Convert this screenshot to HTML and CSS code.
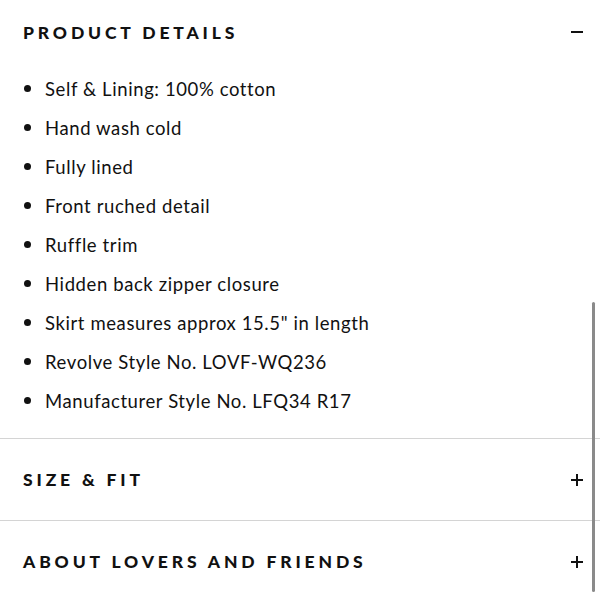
FILE: index.html
```html
<html>
 <head>
	<meta charset="UTF-8">
	<title>Product details</title>
	<link rel="stylesheet" href="styles.css">
 </head>
 <body>
 <div id="panel">
	<div class="section open">
		<div class="head">
			<span class="title">PRODUCT DETAILS</span>
			<span class="sign minus"></span>
		</div>
		<ul class="details">
			<li>Self &amp; Lining: 100% cotton</li>
			<li>Hand wash cold</li>
			<li>Fully lined</li>
			<li>Front ruched detail</li>
			<li>Ruffle trim</li>
			<li>Hidden back zipper closure</li>
			<li>Skirt measures approx 15.5" in length</li>
			<li>Revolve Style No. LOVF-WQ236</li>
			<li>Manufacturer Style No. LFQ34 R17</li>
		</ul>
	</div>
	<div class="section">
		<div class="head">
			<span class="title">SIZE &amp; FIT</span>
			<span class="sign plus"></span>
		</div>
	</div>
	<div class="section">
		<div class="head">
			<span class="title">ABOUT LOVERS AND FRIENDS</span>
			<span class="sign plus"></span>
		</div>
	</div>
 </div>
 <div class="scrollbar"></div>
 </body>
</html>
```

FILE: styles.css
```css
	*{margin:0;padding:0;}
	html,body{height:100%;overflow:hidden;background:#fff;}
	body{font-family:"Lato","Open Sans",sans-serif;color:#111;}

	#panel{width:600px;}

	.section{border-top:1px solid #d4d4d4;}
	.section.open{border-top:none;}

	.head{
		display:flex;
		align-items:center;
		justify-content:space-between;
		height:81px;
		padding:0 17px 0 23px;
	}
	.section.open .head{height:64px;}

	.title{
		font-size:17.5px;
		font-weight:900;
		letter-spacing:3.85px;
	}

	/* 加减号 */
	.sign{position:relative;width:12px;height:12px;}
	.sign:before,.sign.plus:after{
		content:"";
		position:absolute;
		left:0;top:5px;
		width:12px;height:2px;
		background:#111;
	}
	.sign.plus:after{left:5px;top:0;width:2px;height:12px;}

	.details{
		list-style:none;
		padding:5px 0 18px 23px;
	}
	.details li{
		display:flex;
		align-items:center;
		height:39px;
		font-size:18.5px;
		letter-spacing:0.6px;
	}
	.details li:before{
		content:"";
		width:7px;height:7px;
		border-radius:50%;
		background:#111;
		margin:0 14px 0 1px;
	}

	.scrollbar{
		position:absolute;
		right:5px;top:302px;
		width:3px;height:290px;
		border-radius:2px;
		background:#8a8a8a;
	}
```
